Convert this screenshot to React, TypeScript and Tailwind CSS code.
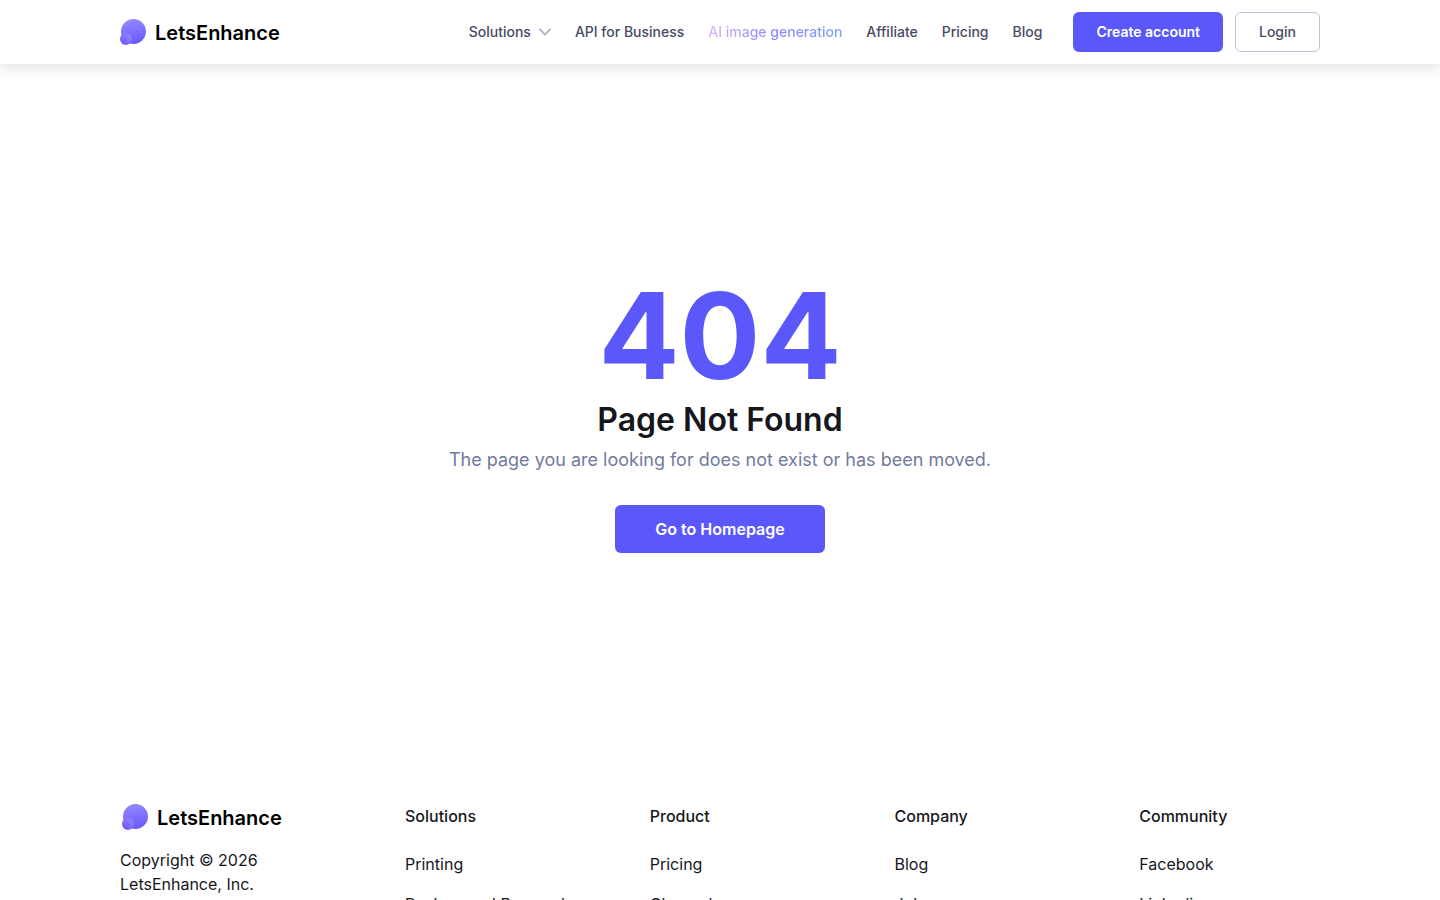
interface FooterColumn {
  title: string;
  links: string[];
}

const footerColumns: FooterColumn[] = [
  { title: "Solutions", links: ["Printing", "Background Removal"] },
  { title: "Product", links: ["Pricing", "Changelog"] },
  { title: "Company", links: ["Blog", "Jobs"] },
  { title: "Community", links: ["Facebook", "Linkedin"] },
];

function Logo({ id }: { id: string }) {
  return (
    <a href="#" className="flex items-center gap-[9px] text-black">
      <svg width="26" height="26" viewBox="0 0 26 26" aria-hidden="true">
        <defs>
          <linearGradient id={`${id}-big`} x1="0.4" y1="0" x2="0.6" y2="1">
            <stop offset="0" stopColor="#9488fe" />
            <stop offset="1" stopColor="#6a58fb" />
          </linearGradient>
          <linearGradient id={`${id}-small`} x1="0.9" y1="0.2" x2="0.2" y2="0.9">
            <stop offset="0" stopColor="#9084fd" />
            <stop offset="1" stopColor="#7058fb" />
          </linearGradient>
        </defs>
        <circle cx="13.5" cy="12.5" r="12.5" fill={`url(#${id}-big)`} />
        <circle cx="5.9" cy="20" r="5.9" fill={`url(#${id}-small)`} />
      </svg>
      <span className="pt-0.5 text-xl leading-6 font-semibold">LetsEnhance</span>
    </a>
  );
}

function Header() {
  return (
    <header className="bg-white shadow-[0_2px_16px_rgba(0,0,0,0.15)]">
      <div className="mx-auto flex h-16 max-w-[1200px] items-center justify-between">
        <Logo id="header" />
        <div className="flex items-center">
          <nav className="flex items-center gap-6 text-sm font-medium text-[#484a64]">
            <button type="button" className="flex items-center gap-2">
              Solutions
              <svg
                width="12"
                height="8"
                viewBox="0 0 12 8"
                fill="none"
                stroke="#b0b8cc"
                strokeWidth="2"
                strokeLinecap="round"
                strokeLinejoin="round"
                aria-hidden="true"
              >
                <path d="M1 1.5l5 5 5-5" />
              </svg>
            </button>
            <a href="#">API for Business</a>
            <a
              href="#"
              className="bg-linear-to-r from-[#dcb4f0] via-[#8f86fb] to-[#78a8fc] bg-clip-text text-transparent"
            >
              AI image generation
            </a>
            <a href="#">Affiliate</a>
            <a href="#">Pricing</a>
            <a href="#">Blog</a>
          </nav>
          <div className="ml-[31px] flex gap-3 text-sm">
            <button type="button" className="h-10 rounded-md bg-[#5b58fb] px-[23px] font-semibold text-white">
              Create account
            </button>
            <button
              type="button"
              className="h-10 rounded-md border border-[#bdbfd6] px-[23px] font-medium text-[#484a64]"
            >
              Login
            </button>
          </div>
        </div>
      </div>
    </header>
  );
}

function NotFound() {
  return (
    <main className="flex flex-col items-center pt-[212px] pb-[251px] text-center">
      <h1 className="text-[120px] leading-[120px] font-bold text-[#5b58fb]">404</h1>
      <h2 className="text-[32px] leading-12 font-semibold text-[#15171c]">Page Not Found</h2>
      <p className="mt-1 text-lg leading-6 text-[#727a9f]">
        The page you are looking for does not exist or has been moved.
      </p>
      <a
        href="#"
        className="mt-[33px] flex h-12 items-center rounded-md bg-[#5b58fb] px-10 text-base font-semibold text-white"
      >
        Go to Homepage
      </a>
    </main>
  );
}

function Footer() {
  return (
    <footer className="mx-auto grid max-w-[1200px] grid-cols-[221px_1fr_1fr_1fr_1fr] gap-16 text-base text-[#15171c]">
      <div>
        <div className="pl-0.5">
          <Logo id="footer" />
        </div>
        <p className="mt-[18px] leading-6">
          Copyright © 2026
          <br />
          LetsEnhance, Inc.
        </p>
      </div>
      {footerColumns.map((column) => (
        <div key={column.title}>
          <h3 className="leading-6 font-medium">{column.title}</h3>
          <ul className="mt-6 space-y-4">
            {column.links.map((link) => (
              <li key={link} className="leading-6">
                <a href="#">{link}</a>
              </li>
            ))}
          </ul>
        </div>
      ))}
    </footer>
  );
}

export default function App() {
  return (
    <div className="h-screen overflow-hidden bg-white font-['Inter',sans-serif]">
      <Header />
      <NotFound />
      <Footer />
    </div>
  );
}
